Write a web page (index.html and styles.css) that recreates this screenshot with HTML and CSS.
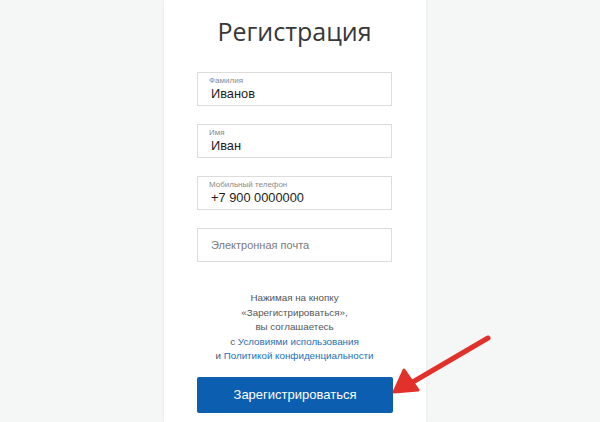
FILE: index.html
```html
<!DOCTYPE html>
<html lang="ru">
<head>
  <meta charset="UTF-8" />
  <meta name="viewport" content="width=device-width, initial-scale=1.0"/>
  <title>Регистрация</title>
  <link rel="stylesheet" href="styles.css">
</head>
<body>
  <div class="card">
    <h1>Регистрация</h1>
    <div class="form-group">
      <div class="field">
        <span class="label">Фамилия</span>
        <span class="value">Иванов</span>
      </div>
      <div class="field">
        <span class="label">Имя</span>
        <span class="value">Иван</span>
      </div>
      <div class="field">
        <span class="label">Мобильный телефон</span>
        <span class="value">+7 900 0000000</span>
      </div>
      <div class="field empty">
        <span class="placeholder">Электронная почта</span>
      </div>
    </div>

    <p class="terms">
      Нажимая на кнопку<br>
      «Зарегистрироваться»,<br>
      вы соглашаетесь<br>
      с <a href="#">Условиями использования</a><br>
      и <a href="#">Политикой конфиденциальности</a>
    </p>

    <button>Зарегистрироваться</button>
  </div>

  <svg class="arrow" width="110" height="70" viewBox="0 0 110 70">
    <line x1="104" y1="8" x2="22" y2="56" stroke="#e2302b" stroke-width="5" stroke-linecap="round"/>
    <polygon points="10,62 20,40 34,60" fill="#e2302b" stroke="#e2302b" stroke-width="3" stroke-linejoin="round"/>
  </svg>
</body>
</html>
```

FILE: styles.css
```css
body {
  margin: 0;
  height: 422px;
  overflow: hidden;
  background-color: #f5f6f6;
  font-family: "Liberation Sans", Arial, sans-serif;
  position: relative;
}

.card {
  margin-left: 164px;
  width: 262px;
  height: 422px;
  background-color: #ffffff;
  box-shadow: 0 0 3px rgba(0, 0, 0, 0.08);
  box-sizing: border-box;
  padding: 13px 34px 0 33px;
}

h1 {
  margin: 0 0 22px;
  font-family: "Open Sans", sans-serif;
  font-weight: 400;
  font-size: 25px;
  line-height: 37px;
  color: #383838;
  text-align: center;
}

.form-group {
  display: flex;
  flex-direction: column;
  gap: 18px;
}

.field {
  height: 34px;
  border: 1px solid #dcdcdc;
  box-sizing: border-box;
  display: flex;
  flex-direction: column;
  padding: 3px 0 0 11px;
}

.label {
  font-size: 8px;
  line-height: 10px;
  color: #8a8a8a;
}

.value {
  font-size: 12.8px;
  line-height: 16px;
  color: #1e1e1e;
  padding-left: 2px;
}

.field.empty {
  justify-content: center;
  padding: 0 0 0 13px;
}

.placeholder {
  font-size: 11px;
  color: #7a7a7a;
}

.terms {
  margin: 29px 0 0;
  font-size: 9.8px;
  line-height: 14.5px;
  color: #555555;
  text-align: center;
}

.terms a {
  color: #1e6fb4;
  text-decoration: none;
}

button {
  display: block;
  margin-top: 13px;
  width: 196px;
  height: 36px;
  border: none;
  border-radius: 2px;
  background-color: #0b5eb0;
  color: #ffffff;
  font-family: "Liberation Sans", Arial, sans-serif;
  font-size: 13px;
  cursor: pointer;
}

.arrow {
  position: absolute;
  left: 384px;
  top: 330px;
}
```
